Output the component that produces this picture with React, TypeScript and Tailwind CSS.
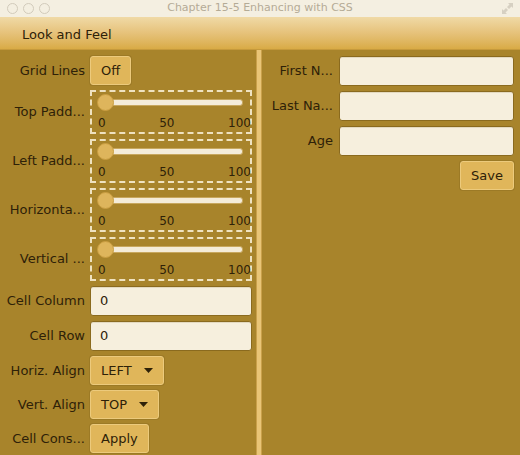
import { ReactNode } from "react";

function Label({ children }: { children: ReactNode }) {
  return (
    <div className="flex items-center justify-end whitespace-nowrap text-[13px] text-[#2e2108]">
      {children}
    </div>
  );
}

function Field({ value }: { value?: string }) {
  return (
    <div className="flex h-[30px] items-center rounded-[3px] border border-[#8a6a1e] bg-[#f6efdd] px-[9px] text-[13px] text-[#2e2108] shadow-[inset_0_1px_0_#e3d9c0]">
      {value}
    </div>
  );
}

function Btn({ children, arrow }: { children: ReactNode; arrow?: boolean }) {
  return (
    <div className="flex h-[29px] items-center gap-[12px] rounded-[3px] border border-[#ecca7c] bg-[#e0b65a] px-[10px] text-[13px] text-[#2e2108] shadow-[0_0_0_1px_#9c7a26]">
      <span>{children}</span>
      {arrow && (
        <svg width="9" height="5" viewBox="0 0 9 5">
          <path d="M0 0h9L4.5 5z" fill="#2e2108" />
        </svg>
      )}
    </div>
  );
}

function Slider() {
  return (
    <div className="flex h-[44px] w-[162px] flex-col border-2 border-dashed border-[#efe2c0] px-[5px] pt-[2px]">
      <div className="flex items-center">
        <div className="z-10 h-[17px] w-[17px] rounded-full border border-[#c99d40] bg-[#deb55c]" />
        <div className="-ml-[3px] h-[7px] w-[132px] rounded-[3px] border border-[#c7a75e] bg-[#f4ecd9]" />
      </div>
      <div className="mt-[6px] flex justify-between text-[12px] leading-none text-[#2e2108]">
        <span className="pl-[1px]">0</span>
        <span>50</span>
        <span className="-mr-[6px]">100</span>
      </div>
    </div>
  );
}

export default function App() {
  return (
    <div
      className="flex h-[455px] w-[520px] flex-col overflow-hidden bg-[#a8842b]"
      style={{ fontFamily: '"DejaVu Sans", "Noto Sans", sans-serif' }}
    >
      <div className="relative flex h-[17px] items-center justify-center bg-[#f4efe1] text-[11px] text-[#b4ab96]">
        <div className="absolute left-[7px] top-[3px] flex gap-[5px]">
          <div className="h-[11px] w-[11px] rounded-full border border-[#d2cbbb]" />
          <div className="h-[11px] w-[11px] rounded-full border border-[#d2cbbb]" />
          <div className="h-[11px] w-[11px] rounded-full border border-[#d2cbbb]" />
        </div>
        <span>Chapter 15-5 Enhancing with CSS</span>
        <svg className="absolute right-[6px] top-[2px]" width="13" height="13" viewBox="0 0 13 13">
          <path d="M7 1h5v5L10.5 4.5 8 7 6 5l2.5-2.5z M6 12H1V7l1.5 1.5L5 6l2 2-2.5 2.5z" fill="#d6d0c2" />
        </svg>
      </div>
      <div className="flex h-[33px] items-center border-b border-[#c69a3c] bg-gradient-to-b from-[#f0daa6] via-[#e6c27a] to-[#d9ab45] pl-[22px] pt-[3px] text-[13px] text-[#2e2108]">
        Look and Feel
      </div>
      <div className="flex flex-1">
        <div className="grid w-[256px] grid-cols-[85px_162px] content-start gap-x-[5px] gap-y-[5px] pt-[6px]">
          <Label>Grid Lines</Label>
          <div className="flex">
            <Btn>Off</Btn>
          </div>
          <Label>Top Padd...</Label>
          <Slider />
          <Label>Left Padd...</Label>
          <Slider />
          <Label>Horizonta...</Label>
          <Slider />
          <Label>Vertical ...</Label>
          <Slider />
          <Label>Cell Column</Label>
          <Field value="0" />
          <Label>Cell Row</Label>
          <Field value="0" />
          <Label>Horiz. Align</Label>
          <div className="flex">
            <Btn arrow>LEFT</Btn>
          </div>
          <Label>Vert. Align</Label>
          <div className="flex">
            <Btn arrow>TOP</Btn>
          </div>
          <Label>Cell Cons...</Label>
          <div className="flex">
            <Btn>Apply</Btn>
          </div>
        </div>
        <div className="w-[6px] border-x border-[#c9a04a] bg-[#e9c577]" />
        <div className="flex flex-1 flex-col gap-[5px] pr-[6px] pt-[6px]">
          <div className="grid grid-cols-[71px_1fr] gap-x-[6px] gap-y-[5px]">
            <Label>First N...</Label>
            <Field />
            <Label>Last Na...</Label>
            <Field />
            <Label>Age</Label>
            <Field />
          </div>
          <div className="flex justify-end">
            <Btn>Save</Btn>
          </div>
        </div>
      </div>
    </div>
  );
}
